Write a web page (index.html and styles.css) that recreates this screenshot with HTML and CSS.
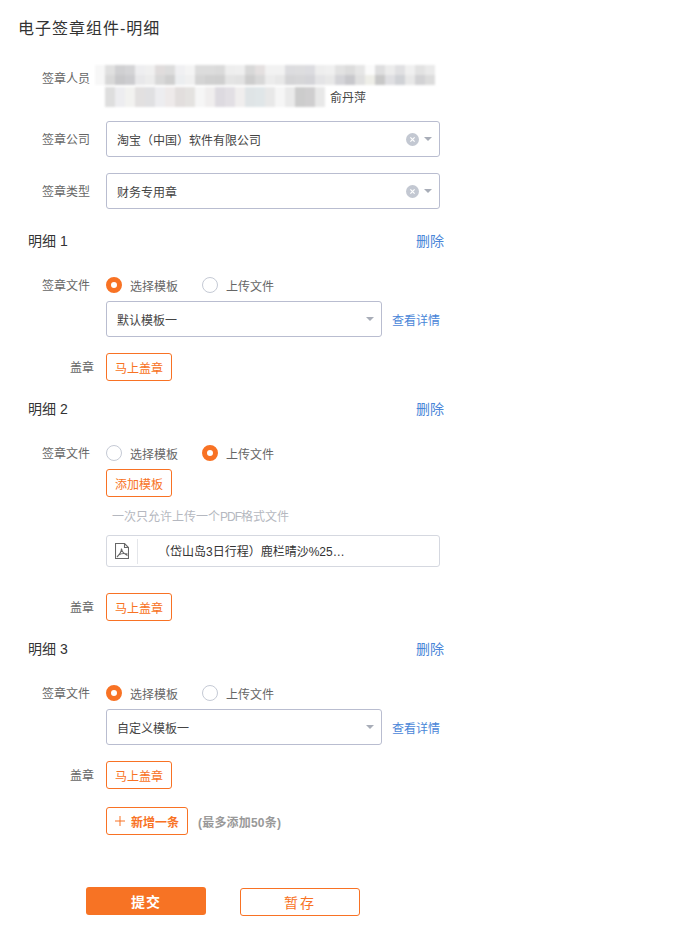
FILE: index.html
```html
<!DOCTYPE html>
<html lang="zh-CN">
  <head>
    <meta charset="UTF-8" />
    <meta name="viewport" content="width=device-width, initial-scale=1.0" />
    <title>电子签章组件-明细</title>
    <link rel="stylesheet" href="styles.css">
  </head>
  <body>
    <h1 class="page-title">电子签章组件-明细</h1>

    <div class="row signer-row">
      <span class="label signer-label">签章人员</span>
      <div class="signers">
        <svg class="mosaic mosaic-top" width="340" height="20" viewBox="95 65 340 20" shape-rendering="crispEdges">
          <g>
            <rect x="95" y="65" width="10" height="10" fill="#f7f7f7"/><rect x="95" y="75" width="10" height="10" fill="#f7f7f7"/>
            <rect x="105" y="65" width="10" height="10" fill="#e0e0e0"/><rect x="105" y="75" width="10" height="10" fill="#d8d8d8"/>
            <rect x="115" y="65" width="10" height="10" fill="#d0d0d2"/><rect x="115" y="75" width="10" height="10" fill="#c8c8ca"/>
            <rect x="125" y="65" width="10" height="10" fill="#d4d4d6"/><rect x="125" y="75" width="10" height="10" fill="#cccccf"/>
            <rect x="135" y="65" width="10" height="10" fill="#eeeef0"/><rect x="135" y="75" width="10" height="10" fill="#e8e8ea"/>
            <rect x="145" y="65" width="10" height="10" fill="#f0f0f0"/><rect x="145" y="75" width="10" height="10" fill="#ececec"/>
            <rect x="155" y="65" width="10" height="10" fill="#e0dcdc"/><rect x="155" y="75" width="10" height="10" fill="#d8d8d8"/>
            <rect x="165" y="65" width="10" height="10" fill="#dcdcdc"/><rect x="165" y="75" width="10" height="10" fill="#cfcfcf"/>
            <rect x="175" y="65" width="10" height="10" fill="#f0f0f2"/><rect x="175" y="75" width="10" height="10" fill="#eceef0"/>
            <rect x="185" y="65" width="10" height="10" fill="#f4f4f4"/><rect x="185" y="75" width="10" height="10" fill="#f0f0f0"/>
            <rect x="195" y="65" width="10" height="10" fill="#dcdcdc"/><rect x="195" y="75" width="10" height="10" fill="#d4d4d4"/>
            <rect x="205" y="65" width="10" height="10" fill="#dcdcdc"/><rect x="205" y="75" width="10" height="10" fill="#d0d0d0"/>
            <rect x="215" y="65" width="10" height="10" fill="#dadada"/><rect x="215" y="75" width="10" height="10" fill="#cfcfcf"/>
            <rect x="225" y="65" width="10" height="10" fill="#eeeeee"/><rect x="225" y="75" width="10" height="10" fill="#e4e4e4"/>
            <rect x="235" y="65" width="10" height="10" fill="#efefef"/><rect x="235" y="75" width="10" height="10" fill="#e2e2e2"/>
            <rect x="245" y="65" width="10" height="10" fill="#d8d8d8"/><rect x="245" y="75" width="10" height="10" fill="#cdcdcd"/>
            <rect x="255" y="65" width="10" height="10" fill="#e4e0e0"/><rect x="255" y="75" width="10" height="10" fill="#d8d8d8"/>
            <rect x="265" y="65" width="10" height="10" fill="#f2f2f2"/><rect x="265" y="75" width="10" height="10" fill="#ececec"/>
            <rect x="275" y="65" width="10" height="10" fill="#f2f2f2"/><rect x="275" y="75" width="10" height="10" fill="#e8e8e8"/>
            <rect x="285" y="65" width="10" height="10" fill="#dcdcdf"/><rect x="285" y="75" width="10" height="10" fill="#d4d4d6"/>
            <rect x="295" y="65" width="10" height="10" fill="#dddddf"/><rect x="295" y="75" width="10" height="10" fill="#d6d6d8"/>
            <rect x="305" y="65" width="10" height="10" fill="#dcdce0"/><rect x="305" y="75" width="10" height="10" fill="#d4d4d8"/>
            <rect x="315" y="65" width="10" height="10" fill="#eeeeee"/><rect x="315" y="75" width="10" height="10" fill="#e4e4e6"/>
            <rect x="325" y="65" width="10" height="10" fill="#f0f0f0"/><rect x="325" y="75" width="10" height="10" fill="#e8e8e8"/>
            <rect x="335" y="65" width="10" height="10" fill="#e2e2e2"/><rect x="335" y="75" width="10" height="10" fill="#d4d4d8"/>
            <rect x="345" y="65" width="10" height="10" fill="#dcdcdc"/><rect x="345" y="75" width="10" height="10" fill="#c8c8cc"/>
            <rect x="355" y="65" width="10" height="10" fill="#e6e6e6"/><rect x="355" y="75" width="10" height="10" fill="#e0e0e0"/>
            <rect x="365" y="65" width="10" height="10" fill="#fbfbfb"/><rect x="365" y="75" width="10" height="10" fill="#eeeee8"/>
            <rect x="375" y="65" width="10" height="10" fill="#dededf"/><rect x="375" y="75" width="10" height="10" fill="#c8c8c8"/>
            <rect x="385" y="65" width="10" height="10" fill="#ececec"/><rect x="385" y="75" width="10" height="10" fill="#dfdfe2"/>
            <rect x="395" y="65" width="10" height="10" fill="#e0e0e2"/><rect x="395" y="75" width="10" height="10" fill="#d0d2d6"/>
            <rect x="405" y="65" width="10" height="10" fill="#f0f0f0"/><rect x="405" y="75" width="10" height="10" fill="#e8e8e8"/>
            <rect x="415" y="65" width="10" height="10" fill="#e2e2e2"/><rect x="415" y="75" width="10" height="10" fill="#d2d2d4"/>
            <rect x="425" y="65" width="10" height="10" fill="#eaeaea"/><rect x="425" y="75" width="10" height="10" fill="#dcdcdc"/>
          </g>
        </svg>
        <div class="signer-line">
          <svg class="mosaic" width="220" height="20" viewBox="105 85 220 20" shape-rendering="crispEdges">
            <rect x="105" y="85" width="10" height="20" fill="#dedede"/>
            <rect x="115" y="85" width="10" height="20" fill="#ededf0"/>
            <rect x="125" y="85" width="10" height="20" fill="#f2f2f0"/>
            <rect x="135" y="85" width="10" height="20" fill="#e2e0e0"/>
            <rect x="145" y="85" width="10" height="20" fill="#e0e0e2"/>
            <rect x="155" y="85" width="10" height="20" fill="#ededf0"/>
            <rect x="165" y="85" width="10" height="20" fill="#eeeaea"/>
            <rect x="175" y="85" width="10" height="20" fill="#e2dedd"/>
            <rect x="185" y="85" width="10" height="20" fill="#e4e2e0"/>
            <rect x="195" y="85" width="10" height="20" fill="#f6f6f6"/>
            <rect x="205" y="85" width="10" height="20" fill="#f0eeee"/>
            <rect x="215" y="85" width="10" height="20" fill="#dddae0"/>
            <rect x="225" y="85" width="10" height="20" fill="#e2dfe4"/>
            <rect x="235" y="85" width="10" height="20" fill="#f0eeee"/>
            <rect x="245" y="85" width="10" height="20" fill="#dfe4e6"/>
            <rect x="255" y="85" width="10" height="20" fill="#e0e6e8"/>
            <rect x="265" y="85" width="10" height="20" fill="#e8e8e8"/>
            <rect x="275" y="85" width="10" height="20" fill="#f6f6f6"/>
            <rect x="285" y="85" width="10" height="20" fill="#eaeaea"/>
            <rect x="295" y="85" width="10" height="20" fill="#cccccc"/>
            <rect x="305" y="85" width="10" height="20" fill="#cfcecf"/>
            <rect x="315" y="85" width="10" height="20" fill="#e8e8e8"/>
          </svg>
          <span class="signer-name">俞丹萍</span>
        </div>
      </div>
    </div>

    <div class="row field-row">
      <span class="label">签章公司</span>
      <div class="select select-full">
        <span class="select-text">淘宝（中国）软件有限公司</span>
        <svg class="clear-icon" width="13" height="13" viewBox="0 0 13 13"><circle cx="6.5" cy="6.5" r="6.5" fill="#c3c8d2"/><path d="M4.4 4.4l4.2 4.2M8.6 4.4l-4.2 4.2" stroke="#fff" stroke-width="1.2"/></svg>
        <span class="caret"></span>
      </div>
    </div>

    <div class="row field-row">
      <span class="label">签章类型</span>
      <div class="select select-full">
        <span class="select-text">财务专用章</span>
        <svg class="clear-icon" width="13" height="13" viewBox="0 0 13 13"><circle cx="6.5" cy="6.5" r="6.5" fill="#c3c8d2"/><path d="M4.4 4.4l4.2 4.2M8.6 4.4l-4.2 4.2" stroke="#fff" stroke-width="1.2"/></svg>
        <span class="caret"></span>
      </div>
    </div>

    <!-- 明细 1 -->
    <div class="detail-head first-head">
      <span class="detail-title">明细 1</span>
      <a class="delete-link">删除</a>
    </div>
    <div class="row radio-row">
      <span class="label">签章文件</span>
      <div class="radios">
        <span class="radio radio-on"></span><span class="radio-text">选择模板</span>
        <span class="radio"></span><span class="radio-text">上传文件</span>
      </div>
    </div>
    <div class="row sub-row">
      <span class="label"></span>
      <div class="select select-short">
        <span class="select-text">默认模板一</span>
        <span class="caret"></span>
      </div>
      <a class="detail-link">查看详情</a>
    </div>
    <div class="row stamp-row">
      <span class="label label-stamp">盖章</span>
      <button class="btn-outline">马上盖章</button>
    </div>

    <!-- 明细 2 -->
    <div class="detail-head">
      <span class="detail-title">明细 2</span>
      <a class="delete-link">删除</a>
    </div>
    <div class="row radio-row">
      <span class="label">签章文件</span>
      <div class="radios">
        <span class="radio"></span><span class="radio-text">选择模板</span>
        <span class="radio radio-on"></span><span class="radio-text">上传文件</span>
      </div>
    </div>
    <div class="row sub-row">
      <span class="label"></span>
      <button class="btn-outline">添加模板</button>
    </div>
    <p class="upload-hint">一次只允许上传一个<span class="hint-latin">PDF</span>格式文件</p>
    <div class="row file-row">
      <span class="label"></span>
      <div class="file-box">
        <svg class="pdf-icon" width="14" height="16" viewBox="0 0 14 16" fill="none" stroke="#666" stroke-width="1.1">
          <path d="M.5.5h9l4 4v11H.5z"/>
          <path d="M9.500.5v4h4"/>
          <path d="M2 14C4 12 6.500 8 6.500 5.500M6.500 5.500C6.800 8 9 11 12.500 12.500M3.500 12C6 10.500 9 10 12.500 11"/>
        </svg>
        <span class="file-name">（岱山岛3日行程）鹿栏晴沙%25…</span>
      </div>
    </div>
    <div class="row stamp-row file-stamp">
      <span class="label label-stamp">盖章</span>
      <button class="btn-outline">马上盖章</button>
    </div>

    <!-- 明细 3 -->
    <div class="detail-head">
      <span class="detail-title">明细 3</span>
      <a class="delete-link">删除</a>
    </div>
    <div class="row radio-row">
      <span class="label">签章文件</span>
      <div class="radios">
        <span class="radio radio-on"></span><span class="radio-text">选择模板</span>
        <span class="radio"></span><span class="radio-text">上传文件</span>
      </div>
    </div>
    <div class="row sub-row">
      <span class="label"></span>
      <div class="select select-short">
        <span class="select-text">自定义模板一</span>
        <span class="caret"></span>
      </div>
      <a class="detail-link">查看详情</a>
    </div>
    <div class="row stamp-row">
      <span class="label label-stamp">盖章</span>
      <button class="btn-outline">马上盖章</button>
    </div>

    <div class="row add-row">
      <span class="label"></span>
      <button class="btn-outline btn-add">
        <svg width="10" height="10" viewBox="0 0 10 10"><path d="M5 0v10M0 5h10" stroke="#f87224" stroke-width="1"/></svg>
        新增一条
      </button>
      <span class="add-note">(最多添加50条)</span>
    </div>

    <div class="actions">
      <button class="btn-submit">提交</button>
      <button class="btn-save">暂存</button>
    </div>
  </body>
</html>
```

FILE: styles.css
```css
* {
  margin: 0;
  padding: 0;
  box-sizing: border-box;
}

body {
  font-family: "Liberation Sans", "Noto Sans CJK SC", sans-serif;
  font-size: 12px;
  background-color: #fff;
  color: #333;
  height: 949px;
  overflow: hidden;
}

button {
  font-family: inherit;
  background: #fff;
}

.page-title {
  font-size: 16px;
  font-weight: 400;
  line-height: 20px;
  letter-spacing: 1px;
  margin: 19px 0 0 18px;
}

.row {
  display: flex;
  align-items: center;
}

.label {
  width: 90px;
  margin-right: 16px;
  padding-top: 2px;
  flex-shrink: 0;
  text-align: right;
  color: #666;
  line-height: 18px;
}

.label-stamp {
  width: 94px;
  margin-right: 12px;
}

/* signer */
.signer-row {
  margin-top: 26px;
  align-items: flex-start;
}

.signer-label {
  padding-top: 0;
  line-height: 28px;
}

.mosaic {
  display: block;
  filter: blur(1px);
}

.mosaic-top {
  margin-left: -11px;
}

.signers {
  height: 40px;
}

.signer-line {
  display: flex;
  align-items: center;
  margin-left: -1px;
}

.signer-name {
  margin-left: 5px;
  line-height: 20px;
  color: #444;
  padding-top: 3px;
}

/* selects */
.field-row {
  margin-top: 16px;
}

.select {
  display: flex;
  align-items: center;
  height: 36px;
  padding: 0 7px 0 10px;
  border: 1px solid #b9bdd0;
  border-radius: 3px;
  background-color: #fff;
}

.select-full {
  width: 334px;
}

.select-short {
  width: 276px;
}

.select-text {
  flex: 1;
  color: #444;
}

.clear-icon {
  margin-right: 5px;
}

.caret {
  width: 0;
  height: 0;
  border-left: 4px solid transparent;
  border-right: 4px solid transparent;
  border-top: 4px solid #a8adb8;
}

/* detail block */
.detail-head {
  display: flex;
  justify-content: space-between;
  width: 416px;
  margin: 18px 0 0 28px;
  line-height: 20px;
  font-size: 14px;
}

.first-head {
  margin-top: 22px;
}

.delete-link {
  color: #4a86d8;
}

.radio-row {
  margin-top: 24px;
}

.radios {
  display: flex;
  align-items: center;
  height: 20px;
}

.radio {
  width: 16px;
  height: 16px;
  border: 1px solid #c5cad5;
  border-radius: 50%;
  background-color: #fff;
}

.radio-on {
  border: 5px solid #f87224;
}

.radio-text {
  width: 72px;
  margin-left: 8px;
  color: #666;
}

.sub-row {
  margin-top: 6px;
}

.detail-link {
  margin-left: 10px;
  color: #4a86d8;
}

.stamp-row {
  margin-top: 16px;
}

.file-stamp {
  margin-top: 26px;
}

.btn-outline {
  width: 66px;
  height: 28px;
  border: 1px solid #f87224;
  border-radius: 3px;
  color: #f87224;
  font-size: 12px;
}

/* upload */
.upload-hint {
  margin: 10px 0 0 112px;
  line-height: 20px;
  color: #b5b8c0;
}

.hint-latin {
  letter-spacing: -1px;
}

.file-row {
  margin-top: 8px;
}

.file-box {
  display: flex;
  align-items: center;
  width: 334px;
  height: 32px;
  padding-left: 8px;
  border: 1px solid #d5d8e0;
  border-radius: 3px;
}

.pdf-icon {
  flex-shrink: 0;
}

.file-name {
  margin-left: 8px;
  padding: 1px 0 0 20px;
  border-left: 1px solid #e4e6ea;
  line-height: 24px;
  color: #333;
}

/* bottom */
.add-row {
  margin-top: 18px;
}

.btn-add {
  width: 82px;
  font-weight: 700;
  display: flex;
  align-items: center;
  justify-content: center;
  gap: 6px;
}

.add-note {
  margin-left: 10px;
  font-weight: 700;
  letter-spacing: 0.2px;
  color: #999;
}

.actions {
  display: flex;
  align-items: flex-start;
  margin: 52px 0 0 86px;
}

.btn-submit {
  width: 120px;
  height: 28px;
  border: none;
  border-radius: 3px;
  background-color: #f77324;
  color: #fff;
  font-size: 14px;
  font-weight: 700;
  letter-spacing: 1px;
}

.btn-save {
  width: 120px;
  height: 28px;
  margin: 1px 0 0 34px;
  border: 1px solid #f87224;
  border-radius: 3px;
  color: #f87224;
  font-size: 14px;
  letter-spacing: 2px;
}
```
